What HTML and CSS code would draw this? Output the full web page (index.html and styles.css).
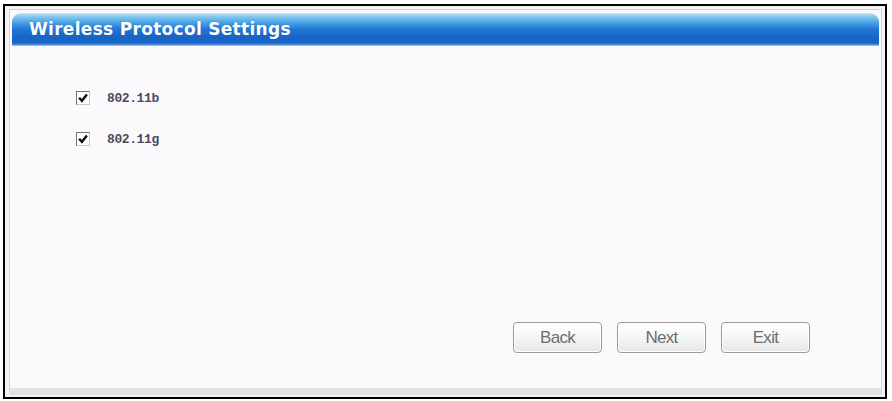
FILE: index.html
```html
<!DOCTYPE html>
<html>
<head>
<meta charset="utf-8">
<link rel="stylesheet" href="styles.css">
</head>
<body>
<div class="frame">
  <div class="panel">
    <div class="header">Wireless Protocol Settings</div>
    <div class="content">
      <div class="options">
        <label class="opt"><span class="box"><svg viewBox="0 0 9 9" width="10" height="10"><path d="M1 4.3 L3.5 7 L8 1.3" fill="none" stroke="#111" stroke-width="2.2"/></svg></span><span class="lbl">802.11b</span></label>
        <label class="opt"><span class="box"><svg viewBox="0 0 9 9" width="10" height="10"><path d="M1 4.3 L3.5 7 L8 1.3" fill="none" stroke="#111" stroke-width="2.2"/></svg></span><span class="lbl">802.11g</span></label>
      </div>
      <div class="buttons">
        <button class="btn">Back</button>
        <button class="btn">Next</button>
        <button class="btn">Exit</button>
      </div>
    </div>
  </div>
</div>
</body>
</html>
```

FILE: styles.css
```css
html, body {
  margin: 0;
  padding: 0;
  background: #ffffff;
}
body {
  width: 892px;
  height: 401px;
  overflow: hidden;
}
.frame {
  box-sizing: border-box;
  margin: 4px 0 0 3px;
  width: 884px;
  height: 395px;
  border: 2px solid #000;
  background: #f4f2f4;
  padding: 3px 3px 2px 4px;
}
.panel {
  box-sizing: border-box;
  height: 100%;
  background: #fcf9fc;
  border: 1px solid #d6d4d6;
  border-bottom: 7px solid #e4e2e4;
  display: flex;
  flex-direction: column;
  padding: 3px 2px 0 2px;
}
.header {
  height: 33px;
  border-radius: 9px 9px 0 0;
  background: linear-gradient(to bottom, #c6e6f8 0px, #8ccdf1 3px, #4ea6e6 9px, #2078d6 16px, #1764c6 24px, #1a66c8 30px, #5a98dc 32px, #c8d8ea 33px);
  color: #ffffff;
  font-family: "DejaVu Sans", Verdana, sans-serif;
  font-weight: bold;
  font-size: 17px;
  letter-spacing: 0.3px;
  line-height: 33px;
  padding-left: 17px;
  text-shadow: 0 0 1px rgba(20, 70, 150, 0.5);
}
.content {
  flex: 1;
  display: flex;
  flex-direction: column;
  justify-content: space-between;
  padding: 0 0 35px 0;
}
.options {
  display: flex;
  flex-direction: column;
  gap: 27px;
  padding: 45px 0 0 64px;
}
.opt {
  display: flex;
  align-items: center;
  height: 14px;
}
.box {
  box-sizing: border-box;
  width: 14px;
  height: 14px;
  border: 1px solid #6f6f6f;
  border-right-color: #c8c8c8;
  border-bottom-color: #c8c8c8;
  background: #ffffff;
  display: flex;
  align-items: center;
  justify-content: center;
}
.lbl {
  margin-left: 17px;
  font-family: "Liberation Mono", "Courier New", monospace;
  font-weight: bold;
  font-size: 13px;
  letter-spacing: -0.4px;
  color: #4b4b5c;
}
.buttons {
  display: flex;
  justify-content: flex-end;
  gap: 15px;
  padding-right: 69px;
}
.btn {
  box-sizing: border-box;
  width: 89px;
  height: 31px;
  border: 1px solid #9c9c9c;
  border-radius: 4px;
  background: linear-gradient(to bottom, #ffffff 0%, #f6f6f6 50%, #e6e6e6 100%);
  box-shadow: inset 0 0 0 1px #ffffff;
  font-family: "Liberation Sans", Arial, sans-serif;
  font-size: 17px;
  letter-spacing: -0.7px;
  color: #6b6e70;
  padding: 0;
}
```
